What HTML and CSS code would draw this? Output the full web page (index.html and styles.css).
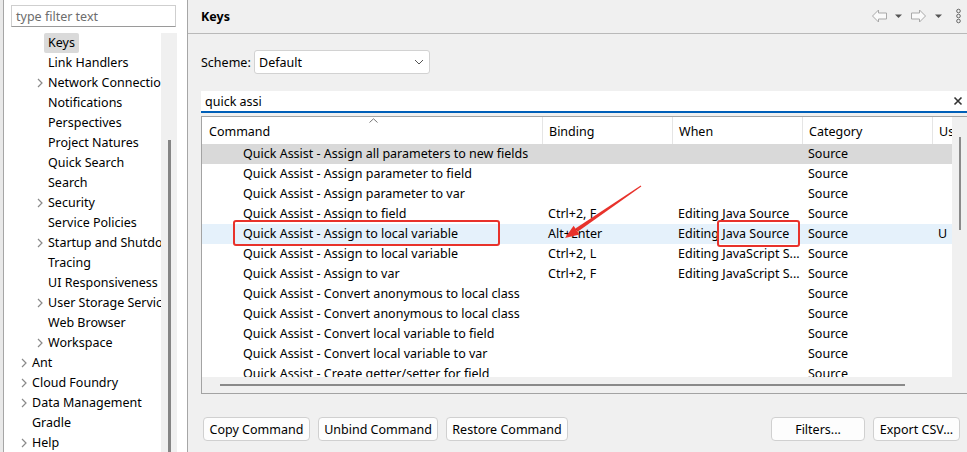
FILE: index.html
```html
<!DOCTYPE html>
<html>
<head>
<meta charset="utf-8">
<link rel="stylesheet" href="styles.css">
</head>
<body>
<div class="edge"></div>
<aside class="sidebar">
  <div class="filter">type filter text</div>
  <div class="tree-wrap">
    <div class="tree">
      <div class="row l2"><span class="chev"></span><span class="label sel">Keys</span></div>
      <div class="row l2"><span class="chev"></span><span class="label">Link Handlers</span></div>
      <div class="row l2"><span class="chev"><svg width="6" height="10" viewBox="0 0 6 10"><polyline points="1,1 5,5 1,9" /></svg></span><span class="label">Network Connections</span></div>
      <div class="row l2"><span class="chev"></span><span class="label">Notifications</span></div>
      <div class="row l2"><span class="chev"></span><span class="label">Perspectives</span></div>
      <div class="row l2"><span class="chev"></span><span class="label">Project Natures</span></div>
      <div class="row l2"><span class="chev"></span><span class="label">Quick Search</span></div>
      <div class="row l2"><span class="chev"></span><span class="label">Search</span></div>
      <div class="row l2"><span class="chev"><svg width="6" height="10" viewBox="0 0 6 10"><polyline points="1,1 5,5 1,9" /></svg></span><span class="label">Security</span></div>
      <div class="row l2"><span class="chev"></span><span class="label">Service Policies</span></div>
      <div class="row l2"><span class="chev"><svg width="6" height="10" viewBox="0 0 6 10"><polyline points="1,1 5,5 1,9" /></svg></span><span class="label">Startup and Shutdown</span></div>
      <div class="row l2"><span class="chev"></span><span class="label">Tracing</span></div>
      <div class="row l2"><span class="chev"></span><span class="label">UI Responsiveness</span></div>
      <div class="row l2"><span class="chev"><svg width="6" height="10" viewBox="0 0 6 10"><polyline points="1,1 5,5 1,9" /></svg></span><span class="label">User Storage Service</span></div>
      <div class="row l2"><span class="chev"></span><span class="label">Web Browser</span></div>
      <div class="row l2"><span class="chev"><svg width="6" height="10" viewBox="0 0 6 10"><polyline points="1,1 5,5 1,9" /></svg></span><span class="label">Workspace</span></div>
      <div class="row l1"><span class="chev"><svg width="6" height="10" viewBox="0 0 6 10"><polyline points="1,1 5,5 1,9" /></svg></span><span class="label">Ant</span></div>
      <div class="row l1"><span class="chev"><svg width="6" height="10" viewBox="0 0 6 10"><polyline points="1,1 5,5 1,9" /></svg></span><span class="label">Cloud Foundry</span></div>
      <div class="row l1"><span class="chev"><svg width="6" height="10" viewBox="0 0 6 10"><polyline points="1,1 5,5 1,9" /></svg></span><span class="label">Data Management</span></div>
      <div class="row l1"><span class="chev"></span><span class="label">Gradle</span></div>
      <div class="row l1"><span class="chev"><svg width="6" height="10" viewBox="0 0 6 10"><polyline points="1,1 5,5 1,9" /></svg></span><span class="label">Help</span></div>
    </div>
    <div class="tree-scroll"><div class="tree-thumb"></div></div>
  </div>
</aside>
<main class="main">
  <div class="header">
    <span class="title">Keys</span>
    <svg class="nav" width="97" height="33" viewBox="0 0 97 33">
      <polygon class="arrow" points="2.5,16 8.5,10 8.5,13 16.5,13 16.5,19 8.5,19 8.5,22"/>
      <polygon class="tri" points="25,14.5 32,14.5 28.5,18"/>
      <polygon class="arrow" points="55.5,16 49.5,10 49.5,13 41.5,13 41.5,19 49.5,19 49.5,22"/>
      <polygon class="tri" points="65,14.5 72,14.5 68.5,18"/>
      <circle class="dot" cx="88.5" cy="11" r="1.8"/>
      <circle class="dot" cx="88.5" cy="16" r="1.8"/>
      <circle class="dot" cx="88.5" cy="21" r="1.8"/>
    </svg>
  </div>
  <div class="content">
    <div class="scheme">
      <span class="scheme-label">Scheme:</span>
      <div class="select"><span>Default</span><svg width="10" height="6" viewBox="0 0 10 6"><polyline points="1,1 5,5 9,1"/></svg></div>
    </div>
    <div class="search">
      <span>quick assi</span>
      <svg class="clear" width="10" height="10" viewBox="0 0 10 10"><path d="M1.5 1.5 L8.5 8.5 M8.5 1.5 L1.5 8.5"/></svg>
    </div>
    <div class="table">
      <div class="grid-area">
        <div class="thead">
          <div class="th">Command<svg class="sort" width="9" height="5" viewBox="0 0 9 5"><polyline points="0.5,4.5 4.5,0.8 8.5,4.5"/></svg></div>
          <div class="th">Binding</div>
          <div class="th">When</div>
          <div class="th">Category</div>
          <div class="th last">User</div>
        </div>
        <div class="tbody">
          <div class="tr gray"><div class="td cmd">Quick Assist - Assign all parameters to new fields</div><div class="td"></div><div class="td"></div><div class="td">Source</div><div class="td"></div></div>
          <div class="tr"><div class="td cmd">Quick Assist - Assign parameter to field</div><div class="td"></div><div class="td"></div><div class="td">Source</div><div class="td"></div></div>
          <div class="tr"><div class="td cmd">Quick Assist - Assign parameter to var</div><div class="td"></div><div class="td"></div><div class="td">Source</div><div class="td"></div></div>
          <div class="tr"><div class="td cmd">Quick Assist - Assign to field</div><div class="td">Ctrl+2, F</div><div class="td">Editing Java Source</div><div class="td">Source</div><div class="td"></div></div>
          <div class="tr blue"><div class="td cmd">Quick Assist - Assign to local variable</div><div class="td">Alt+Enter</div><div class="td">Editing Java Source</div><div class="td">Source</div><div class="td">U</div></div>
          <div class="tr"><div class="td cmd">Quick Assist - Assign to local variable</div><div class="td">Ctrl+2, L</div><div class="td">Editing JavaScript S...</div><div class="td">Source</div><div class="td"></div></div>
          <div class="tr"><div class="td cmd">Quick Assist - Assign to var</div><div class="td">Ctrl+2, F</div><div class="td">Editing JavaScript S...</div><div class="td">Source</div><div class="td"></div></div>
          <div class="tr"><div class="td cmd">Quick Assist - Convert anonymous to local class</div><div class="td"></div><div class="td"></div><div class="td">Source</div><div class="td"></div></div>
          <div class="tr"><div class="td cmd">Quick Assist - Convert anonymous to local class</div><div class="td"></div><div class="td"></div><div class="td">Source</div><div class="td"></div></div>
          <div class="tr"><div class="td cmd">Quick Assist - Convert local variable to field</div><div class="td"></div><div class="td"></div><div class="td">Source</div><div class="td"></div></div>
          <div class="tr"><div class="td cmd">Quick Assist - Convert local variable to var</div><div class="td"></div><div class="td"></div><div class="td">Source</div><div class="td"></div></div>
          <div class="tr"><div class="td cmd">Quick Assist - Create getter/setter for field</div><div class="td"></div><div class="td"></div><div class="td">Source</div><div class="td"></div></div>
        </div>
        <div class="hscroll"><div class="hthumb"></div></div>
      </div>
      <div class="vscroll"><div class="vthumb"></div></div>
    </div>
    <div class="buttons">
      <button class="btn w-copy">Copy Command</button>
      <button class="btn w-unbind">Unbind Command</button>
      <button class="btn w-restore">Restore Command</button>
      <span class="spacer"></span>
      <button class="btn w-filters">Filters...</button>
      <button class="btn w-export">Export CSV...</button>
    </div>
  </div>
</main>
<div class="annot box1"></div>
<div class="annot box2"></div>
<svg class="annot-arrow" width="967" height="452" viewBox="0 0 967 452">
  <polygon points="641.3,186.4 640.7,185.6 575.4,228.5 577.6,231.7"/>
  <polygon points="565,238 579.5,234.4 573.6,225.8"/>
</svg>
</body>
</html>
```

FILE: styles.css
```css
* { box-sizing: border-box; }
html, body { margin: 0; padding: 0; }
body {
  width: 967px;
  height: 452px;
  overflow: hidden;
  display: flex;
  position: relative;
  background: #f0f0f0;
  color: #000;
  font-family: "Noto Sans", sans-serif;
  font-size: 12.5px;
}

.edge {
  width: 4px;
  background: #e9e9e9;
  border-right: 1px solid #a6a6a6;
}

/* ---------- sidebar ---------- */
.sidebar {
  width: 184px;
  height: 452px;
  overflow: hidden;
  background: #fff;
  border-right: 1px solid #a6a6a6;
  display: flex;
  flex-direction: column;
}
.filter {
  margin: 5px 0 0 7px;
  width: 165px;
  height: 22px;
  flex: none;
  border: 1px solid #cfcfcf;
  border-bottom-color: #9a9a9a;
  padding-left: 4px;
  line-height: 21px;
  color: #6d6d6d;
  white-space: nowrap;
}
.tree-wrap {
  margin-top: 6px;
  flex: 1;
  display: flex;
  min-height: 0;
  overflow: hidden;
}
.tree {
  width: 157px;
  overflow: hidden;
}
.row {
  height: 20px;
  display: flex;
  align-items: center;
  white-space: nowrap;
}
.row.l1 { padding-left: 12px; }
.row.l2 { padding-left: 28px; }
.chev {
  width: 16px;
  height: 20px;
  flex: none;
  display: flex;
  align-items: center;
  justify-content: center;
}
.chev polyline {
  fill: none;
  stroke: #8a8a8a;
  stroke-width: 1.2;
}
.label {
  line-height: 20px;
}
.label.sel {
  background: #dadada;
  margin-left: -4px;
  padding: 0 4px;
  border-radius: 2px;
}
.tree-scroll {
  width: 16px;
  background: #f0f0f0;
  padding: 107px 0 0 7px;
}
.tree-thumb {
  width: 3px;
  height: 400px;
  background: #858585;
}

/* ---------- main ---------- */
.main {
  flex: 1;
  min-width: 0;
  display: flex;
  flex-direction: column;
  overflow: hidden;
}
.header {
  height: 34px;
  flex: none;
  border-bottom: 1px solid #b9b9b9;
  display: flex;
  align-items: center;
  padding-left: 13px;
}
.title {
  font-weight: bold;
}
.nav { margin-left: auto; }
.nav .arrow { fill: #fafafa; stroke: #a9a9a9; stroke-width: 1; }
.nav .tri { fill: #555; }
.nav .dot { fill: none; stroke: #666; stroke-width: 1; }

.content {
  padding-left: 13px;
  display: flex;
  flex-direction: column;
}
.scheme {
  margin-top: 16px;
  height: 24px;
  display: flex;
  align-items: center;
}
.scheme-label { width: 53px; }
.select {
  width: 176px;
  height: 24px;
  background: #fff;
  border: 1px solid #d2d2d2;
  border-radius: 3px;
  display: flex;
  align-items: center;
  justify-content: space-between;
  padding: 0 5px 0 4px;
}
.select polyline { fill: none; stroke: #555; stroke-width: 1; }

.search {
  margin-top: 17px;
  height: 22px;
  background: #fff;
  border-bottom: 2px solid #005fb8;
  display: flex;
  align-items: center;
  padding: 0 4px 0 4px;
}
.search .clear { margin-left: auto; }
.clear path { stroke: #333; stroke-width: 1.6; }

.table {
  margin-top: 3px;
  height: 278px;
  border: 1px solid #a3a3a3;
  border-right: none;
  display: flex;
}
.grid-area {
  flex: 1;
  min-width: 0;
  display: flex;
  flex-direction: column;
  background: #fff;
}
.thead, .tr {
  display: grid;
  grid-template-columns: 341px 130px 130px 130px 1fr;
}
.thead { height: 27px; }
.th {
  border-right: 1px solid #e5e5e5;
  padding: 6px 0 0 6px;
  white-space: nowrap;
  overflow: hidden;
  position: relative;
}
.th:first-child { padding-left: 7px; }
.th.last { border-right: none; }
.sort {
  position: absolute;
  left: 167px;
  top: 1px;
}
.sort polyline { fill: none; stroke: #777; stroke-width: 1; }
.tbody {
  height: 233px;
  overflow: hidden;
}
.tr { height: 20px; }
.tr.gray { background: #d9d9d9; }
.tr.blue { background: #e5f1fb; }
.td {
  line-height: 19px;
  padding-left: 5px;
  white-space: nowrap;
  overflow: hidden;
}
.td.cmd { padding-left: 41px; }
.hscroll {
  height: 16px;
  background: #f0f0f0;
  padding: 7px 0 0 18px;
}
.hthumb {
  width: 685px;
  height: 2px;
  background: #8a8a8a;
}
.vscroll {
  width: 15px;
  background: #f0f0f0;
  padding: 20px 0 0 7px;
}
.vthumb {
  width: 2px;
  height: 93px;
  background: #8a8a8a;
}

.buttons {
  margin-top: 23px;
  display: flex;
  padding: 0 7px 0 2px;
}
.btn {
  height: 24px;
  background: #fdfdfd;
  border: 1px solid #d0d0d0;
  border-radius: 4px;
  font-family: inherit;
  font-size: 12.5px;
  color: #000;
  padding: 0;
  margin-right: 8px;
}
.spacer { flex: 1; }
.w-copy { width: 107px; }
.w-unbind { width: 120px; }
.w-restore { width: 122px; }
.w-filters { width: 94px; }
.w-export { width: 87px; margin-right: 0; }

/* ---------- annotations ---------- */
.annot {
  position: absolute;
  border: 2.5px solid #e8322b;
  border-radius: 3px;
}
.box1 { left: 233px; top: 220px; width: 267px; height: 26px; }
.box2 { left: 717px; top: 220px; width: 83px; height: 27px; }
.annot-arrow {
  position: absolute;
  left: 0;
  top: 0;
  pointer-events: none;
}
.annot-arrow polygon { fill: #e8322b; }
```
